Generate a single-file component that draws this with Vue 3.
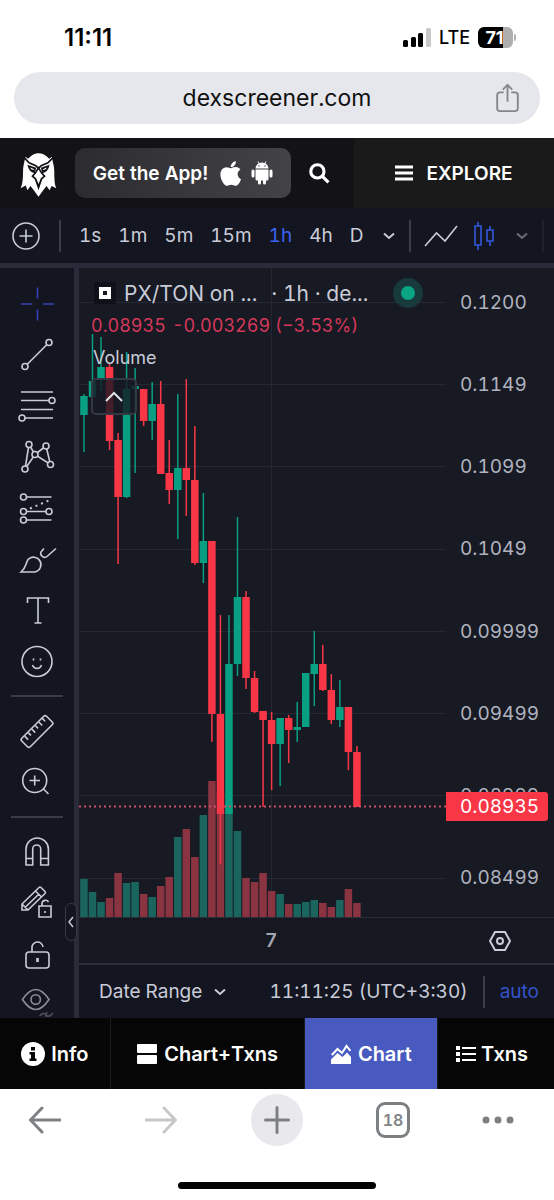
<template>
  <div class="phone">
    <div class="status-bar">
      <span class="clock">11:11</span>
      <div class="status-right">
        <svg class="signal" viewBox="0 0 28 19" aria-hidden="true">
          <rect x="0" y="12" width="5" height="7" rx="1.5" />
          <rect x="8" y="9" width="5" height="10" rx="1.5" />
          <rect x="15" y="5" width="5" height="14" rx="1.5" />
          <rect class="weak" x="23" y="0" width="5" height="19" rx="1.5" />
        </svg>
        <span class="network">LTE</span>
        <span class="battery">71</span>
      </div>
    </div>

    <div class="address">
      <input v-model="url" class="url" type="text" aria-label="Address" />
      <button class="share" aria-label="Share">
        <svg viewBox="0 0 24 32" aria-hidden="true">
          <path d="M8 10H4a3 3 0 0 0-3 3v14a3 3 0 0 0 3 3h16a3 3 0 0 0 3-3V13a3 3 0 0 0-3-3h-4M12 20V2M7 7l5-5 5 5" />
        </svg>
      </button>
    </div>

    <header class="site-header">
      <a class="logo" href="#" aria-label="Home">
        <svg viewBox="60 52 110 134" aria-hidden="true">
          <path fill="#fff" d="M76 66L84 72Q115 40 147 72L155 66C156 80 162 90 162 110C162 135 163 148 168 160L154 153L148 166L139 153L129 166L115 185L101 166L91 153L82 166L77 152L62 160C68 145 69 130 69 110C69 90 74 80 76 66Z" />
          <path fill="none" stroke="#121217" stroke-width="5" d="M72 68L87 84L107 93L115 101L123 93L143 84L159 68" />
          <path fill="#121217" d="M82 90L108 99L104 115Q86 112 82 90ZM148 90L122 99L126 115Q144 112 148 90Z" />
          <path fill="#fff" d="M90 98L103 103Q94 108 90 98ZM140 98L127 103Q136 108 140 98Z" />
          <path fill="#fff" stroke="#121217" stroke-width="5" d="M115 99L106 114L97 124L106 132L115 154L124 132L133 124L124 114Z" />
          <path fill="#121217" d="M104 132L115 166L126 132L115 152Z" />
        </svg>
      </a>
      <button class="get-app">
        <span>Get the App!</span>
        <svg class="apple" viewBox="0 28 376 456" aria-hidden="true">
          <path d="M318.7 268.7c-.2-36.7 16.4-64.4 50-84.8-18.8-26.9-47.2-41.7-84.7-44.6-35.5-2.8-74.3 20.7-88.5 20.7-15 0-49.4-19.7-76.4-19.7C63.3 141.2 4 184.8 4 273.5q0 39.3 14.4 81.2c12.8 36.7 59 126.7 107.2 125.2 25.2-.6 43-17.9 75.8-17.9 31.8 0 48.3 17.9 76.4 17.9 48.6-.7 90.4-82.5 102.6-119.3-65.2-30.7-61.7-90-61.7-91.9zm-56.6-164.2c27.3-32.4 24.8-61.9 24-72.5-24.1 1.4-52 16.4-67.9 34.9-17.5 19.8-27.8 44.3-25.6 71.9 26.1 2 49.9-11.4 69.5-34.3z" />
        </svg>
        <svg class="android" viewBox="0 0 22 24" aria-hidden="true">
          <path d="M4.5 7.5a6.5 6 0 0 1 13 0zM4.5 8.5h13V18a1.5 1.5 0 0 1-1.5 1.5h-1V22a1.5 1.5 0 0 1-3 0v-2.5h-2V22a1.5 1.5 0 0 1-3 0v-2.5H6A1.5 1.5 0 0 1 4.5 18z" />
          <rect x="0.5" y="8.5" width="3" height="8" rx="1.5" />
          <rect x="18.5" y="8.5" width="3" height="8" rx="1.5" />
          <path class="antenna" d="M7 .5l1.5 2.5M15 .5l-1.5 2.5" />
          <circle class="hole" cx="8" cy="5" r="0.7" />
          <circle class="hole" cx="14" cy="5" r="0.7" />
        </svg>
      </button>
      <button class="search" aria-label="Search">
        <svg viewBox="0 0 20 20" aria-hidden="true">
          <circle cx="8" cy="8" r="6.3" />
          <path d="M12.5 12.5L18.5 18.5" />
        </svg>
      </button>
      <button class="explore">
        <svg viewBox="0 0 18 16" aria-hidden="true">
          <path d="M0 2h18M0 8h18M0 14h18" />
        </svg>
        <span>EXPLORE</span>
      </button>
    </header>

    <div class="toolbar">
      <button class="tool add" aria-label="Compare">
        <svg width="28" height="28" viewBox="0 0 28 28" aria-hidden="true">
          <circle cx="14" cy="14" r="13" />
          <path d="M14 7.5v13M7.5 14h13" />
        </svg>
      </button>
      <span class="divider"></span>
      <div class="intervals">
        <button
          v-for="i in intervals"
          :key="i"
          class="interval"
          :class="{ active: i === interval }"
          @click="interval = i"
        >{{ i }}</button>
      </div>
      <button class="tool more" aria-label="More intervals">
        <svg width="12" height="8" viewBox="0 0 12 8" aria-hidden="true"><path d="M1 1.5l5 4.5 5-4.5" /></svg>
      </button>
      <span class="divider"></span>
      <button class="tool line" aria-label="Line chart">
        <svg width="34" height="22" viewBox="0 0 34 22" aria-hidden="true"><path d="M1 21L12.5 8l8.5 8L33 1" /></svg>
      </button>
      <button class="tool candle-type" aria-label="Candles">
        <svg width="22" height="30" viewBox="0 0 22 30" aria-hidden="true">
          <path d="M2 5h6v19H2zM5 1v4M5 24v5M14 9h6v11h-6zM17 5v4M17 20v5" />
        </svg>
      </button>
      <button class="tool dim" aria-label="Chart types">
        <svg width="12" height="8" viewBox="0 0 12 8" aria-hidden="true"><path d="M1 1.5l5 4.5 5-4.5" /></svg>
      </button>
      <span class="divider faint"></span>
    </div>

    <main class="workspace">
      <aside class="drawing-tools">
        <template v-for="t in tools" :key="t.name">
          <button class="draw" :class="[t.name, { active: t.name === tool }]" :aria-label="t.name" @click="tool = t.name">
            <svg width="44" height="44" viewBox="0 0 44 44" aria-hidden="true">
              <path :d="t.d" />
              <path v-if="t.dots" class="dots" :d="t.dots" />
              <path v-if="t.next" class="next" :d="t.next" />
              <g v-if="t.name === 'ruler'" transform="rotate(-45 22 22.5)">
                <rect x="4.5" y="16.5" width="35" height="12" rx="2" />
                <path d="M10 17v5M15 17v4M20 17v5M25 17v4M30 17v5M35 17v4" />
              </g>
              <circle v-for="(c, n) in t.circles || []" :key="n" class="node" :cx="c[0]" :cy="c[1]" :r="c[2] || 3" />
            </svg>
          </button>
          <span v-if="t.last" class="rule"></span>
        </template>
        <button class="collapse" aria-label="Hide drawing tools">
          <svg width="6" height="12" viewBox="0 0 6 12" aria-hidden="true"><path d="M5 1L1 6l4 5" /></svg>
        </button>
      </aside>

      <section class="chart">
        <div class="plot-row">
          <div class="plot">
            <svg class="candles" viewBox="0 0 367 649" preserveAspectRatio="none" role="img" aria-label="PX/TON price">
              <path class="grid" d="M0 34.5H367M0 116.5H367M0 198.5H367M0 281.5H367M0 363.5H367M0 445.5H367M0 527.5H367M0 610.5H367M192.5 0V649" />
              <g v-for="(c, n) in candles" :key="n" :class="c[0] ? 'up' : 'down'">
                <rect class="volume" :x="barX(n)" :y="c[5]" width="7.5" :height="649 - c[5]" />
                <rect :x="barX(n) + 3" :y="c[1]" width="1.5" :height="c[4] - c[1]" />
                <rect :x="barX(n)" :y="c[2]" width="7.5" :height="c[3] - c[2]" />
              </g>
              <path class="last-price" d="M0 538.5H367" />
            </svg>

            <div class="legend">
              <div class="legend-title">
                <span class="pair-icon"></span>
                <span class="pair">PX/TON on ...</span>
                <span class="source">· 1h · de...</span>
                <span class="live"></span>
              </div>
              <div class="legend-values">
                <span>0.08935</span>
                <span>-0.003269 (−3.53%)</span>
              </div>
              <div class="legend-volume">Volume</div>
              <button class="fold" aria-label="Hide indicators">
                <svg width="18" height="11" viewBox="0 0 18 11" aria-hidden="true"><path d="M1 10l8-8 8 8" /></svg>
              </button>
            </div>
          </div>
          <div class="price-axis">
            <span v-for="p in prices" :key="p">{{ p }}</span>
            <span class="current">0.08935</span>
          </div>
        </div>

        <div class="time-axis">
          <span class="day">7</span>
          <button class="axis-settings" aria-label="Axis settings">
            <svg width="22" height="20" viewBox="0 0 22 20" aria-hidden="true">
              <path d="M6 1h10l5 9-5 9H6l-5-9z" />
              <circle cx="11" cy="10" r="3" />
            </svg>
          </button>
        </div>

        <div class="chart-footer">
          <button class="range">
            <span>Date Range</span>
            <svg width="12" height="8" viewBox="0 0 12 8" aria-hidden="true"><path d="M1 1.5l5 4.5 5-4.5" /></svg>
          </button>
          <button class="timezone">11:11:25 (UTC+3:30)</button>
          <span class="divider"></span>
          <button class="auto">auto</button>
        </div>
      </section>
    </main>

    <nav class="tabs">
      <button class="tab info">
        <svg width="24" height="24" viewBox="0 0 24 24" aria-hidden="true">
          <circle cx="12" cy="12" r="12" />
          <path fill="#060606" d="M10 5h4v3.5h-4zM8.5 10H14v6.5h1.5V19h-7v-2.5H10v-4H8.5z" />
        </svg>
        <span>Info</span>
      </button>
      <button class="tab both">
        <svg width="20" height="20" viewBox="0 0 20 20" aria-hidden="true">
          <rect x="0" y="0" width="20" height="9" rx="1" />
          <rect x="0" y="11" width="20" height="9" rx="1" />
        </svg>
        <span>Chart+Txns</span>
      </button>
      <button class="tab chart-tab">
        <svg width="20" height="20" viewBox="0 0 20 20" aria-hidden="true">
          <path d="M0 20v-4.5L6.5 9l5 4 4.5-4.5L20 13v7z" />
          <path class="peak" d="M.8 11L6.5 5l4.5 4L15.5 2l4 5" />
        </svg>
        <span>Chart</span>
      </button>
      <button class="tab txns">
        <svg width="20" height="16" viewBox="0 0 20 16" aria-hidden="true">
          <path d="M0 0h4v4H0zM0 6h4v4H0zM0 12h4v4H0zM6 1h14v2H6zM6 7h14v2H6zM6 13h14v2H6z" />
        </svg>
        <span>Txns</span>
      </button>
    </nav>

    <footer class="browser-nav">
      <div class="nav-buttons">
        <button aria-label="Back">
          <svg width="32" height="28" viewBox="0 0 32 28" aria-hidden="true"><path d="M31 14H2M13 2L1.5 14 13 26" /></svg>
        </button>
        <button class="disabled" aria-label="Forward">
          <svg width="32" height="28" viewBox="0 0 32 28" aria-hidden="true"><path d="M1 14h29M19 2l11.5 12L19 26" /></svg>
        </button>
        <button aria-label="New tab">
          <span class="new-tab">
            <svg width="26" height="28" viewBox="0 0 26 28" aria-hidden="true"><path d="M13 1.5v25M1.5 14h23" /></svg>
          </span>
        </button>
        <button aria-label="Tabs"><span class="count">18</span></button>
        <button aria-label="Menu">
          <svg class="dots-menu" width="32" height="8" viewBox="0 0 32 8" aria-hidden="true">
            <circle cx="4" cy="4" r="3.5" />
            <circle cx="16" cy="4" r="3.5" />
            <circle cx="28" cy="4" r="3.5" />
          </svg>
        </button>
      </div>
      <span class="home-bar"></span>
    </footer>
  </div>
</template>

<script setup>
import { ref } from 'vue'

const url = ref('dexscreener.com')
const interval = ref('1h')
const tool = ref('cross')

const intervals = ['1s', '1m', '5m', '15m', '1h', '4h', 'D']
const prices = ['0.1200', '0.1149', '0.1099', '0.1049', '0.09999', '0.09499', '0.08999', '0.08499']

const tools = [
  { name: 'cross', d: 'M6 22h11M28 22h11M22.5 5.5v11M22.5 27.5v11' },
  { name: 'trend', d: 'M12 31.5L32 11.5', circles: [[34, 9.5], [10, 33.5]] },
  { name: 'fib', d: 'M6 8h32M6 16.5h28M6 25.5h32M10 34h28', circles: [[37, 16.5], [7, 34]] },
  {
    name: 'pattern',
    d: 'M14 9.5L20 19.5L31 11L35.5 29.5L20 19.5L10 34L14 9.5',
    circles: [[14, 9.5], [31, 11], [20, 19.5], [10, 34], [35.5, 29.5]]
  },
  {
    name: 'forecast',
    d: 'M11.5 11H36.5M11.5 25.5H31M11.5 34H36.5',
    dots: 'M15 22.5L35 14',
    circles: [[8.5, 11], [8.5, 25.5], [34, 25.5], [8.5, 34]]
  },
  { name: 'brush', d: 'M6 35C11 31 10.5 27 13 22.5A7.5 7.5 0 1 1 20 35ZM29 11.5l-3 3.5c-1.5 3 3 7 6 4.5L41 11.5' },
  { name: 'text', d: 'M12.5 15v-5h21v5M23 10v25M19.5 35h7' },
  { name: 'emoji', d: 'M17.5 26c1.5 4.5 7.5 4.5 9 0M18.5 19.5v2M25.5 19.5v2', circles: [[22, 22.5, 15]], last: true },
  { name: 'ruler', d: '' },
  { name: 'zoom', d: 'M28.5 29L33.5 34M14.5 20.5h10.5M19.7 15.5v10', circles: [[19.7, 20.5, 12]], last: true },
  { name: 'magnet', d: 'M11 35V19.2a11.2 11.2 0 0 1 22.4 0V35h-7.7V19a4 4 0 0 0-8 0V35zM11 28.5h6.7M25.7 28.5h7.7' },
  {
    name: 'pencil',
    d: 'M7 29v-6L24 6.5q1-1 2 0l4 4q1 1 0 2L13 29zM20.5 10l6 6M10 26.5L24 13M7 23l6 6M24 25h12v11H24zM27 25v-2.5a3.5 3.5 0 0 1 6.5-1.5M30 30v2'
  },
  { name: 'lock', d: 'M14 20h17a3 3 0 0 1 3 3v10a3 3 0 0 1-3 3H14a3 3 0 0 1-3-3V23a3 3 0 0 1 3-3M17 20v-4a5.5 5.5 0 0 1 11-1M22 26v4M23 26v4' },
  {
    name: 'eye',
    d: 'M7.5 23.5Q20.7 3.5 34 23.5Q20.7 43.5 7.5 23.5Z',
    next: 'M24.5 40q4-4 6-1.5l1 3.5M32 36l-1 3q3 3 7-2',
    circles: [[20.7, 23.5, 4.7]]
  }
]

// up, high, body top, body bottom, low, volume top
const candles = [
  [1, 126, 128, 147, 184, 611],
  [1, 66, 113, 129, 130, 624],
  [1, 69, 99, 112, 123, 634],
  [0, 96, 99, 173, 182, 630],
  [0, 165, 172, 229, 296, 605],
  [1, 84, 121, 229, 230, 615],
  [1, 100, 118, 121, 205, 614],
  [0, 121, 121, 153, 158, 626],
  [1, 114, 136, 153, 172, 629],
  [0, 113, 136, 206, 206, 618],
  [0, 172, 205, 222, 236, 609],
  [1, 126, 200, 222, 271, 569],
  [0, 111, 200, 212, 248, 561],
  [0, 158, 212, 295, 297, 589],
  [1, 225, 273, 295, 315, 547],
  [0, 273, 273, 446, 474, 513],
  [0, 347, 446, 546, 596, 525],
  [1, 347, 396, 546, 546, 535],
  [1, 249, 329, 396, 408, 563],
  [0, 323, 329, 410, 421, 610],
  [0, 403, 410, 444, 445, 614],
  [0, 443, 443, 452, 539, 605],
  [0, 444, 452, 476, 522, 623],
  [1, 450, 450, 476, 518, 626],
  [0, 447, 450, 462, 495, 636],
  [1, 434, 459, 462, 474, 636],
  [1, 405, 405, 459, 459, 634],
  [1, 363, 396, 406, 438, 632],
  [0, 377, 396, 422, 423, 635],
  [0, 406, 422, 452, 456, 639],
  [1, 412, 439, 452, 459, 632],
  [0, 439, 439, 484, 502, 621],
  [0, 478, 484, 539, 539, 635]
]

const barX = n => 1.2 + n * 8.53
</script>

<style>
body {
  margin: 0;
  background: #fff;
}
</style>

<style scoped>
.phone {
  font-family: Inter, "Liberation Sans", sans-serif;
  font-variant-numeric: tabular-nums;
  color: #c9ccd8;
  background: #fff;
}
button {
  background: none;
  border: none;
  padding: 0;
  margin: 0;
  font: inherit;
  font-variant-numeric: inherit;
  color: inherit;
  display: flex;
  align-items: center;
  justify-content: center;
  cursor: pointer;
}
svg {
  display: block;
  flex-shrink: 0;
}
.status-bar {
  height: 72px;
  padding: 2px 41px 0 64px;
  display: flex;
  justify-content: space-between;
  align-items: center;
  color: #000;
  box-sizing: border-box;
  font-variant-numeric: proportional-nums;
}
.clock {
  font-size: 24px;
  font-weight: 600;
}
.status-right {
  display: flex;
  align-items: center;
  gap: 8px;
}
.signal {
  width: 28px;
  height: 19px;
}
.signal .weak { fill: #c9c9c9; }
.network {
  font-size: 18px;
  font-weight: 500;
}
.battery {
  position: relative;
  box-sizing: border-box;
  width: 35px;
  height: 21px;
  padding-right: 2px;
  border-radius: 6px;
  background: linear-gradient(90deg, #000 71%, #aeaeae 71%);
  color: #fff;
  text-align: center;
  font-size: 18px;
  font-weight: 700;
  line-height: 21px;
}
.battery::after {
  content: "";
  position: absolute;
  right: -3px;
  top: 7px;
  width: 2px;
  height: 7px;
  border-radius: 0 2px 2px 0;
  background: #aeaeae;
}
.address {
  margin: 0 14px 14px;
  height: 52px;
  border-radius: 26px;
  background: #e5e7ec;
  display: flex;
  align-items: center;
  padding: 0 20px 0 56px;
}
.url {
  flex: 1;
  min-width: 0;
  border: none;
  background: none;
  outline: none;
  text-align: center;
  font: inherit;
  font-size: 23px;
  color: #111;
  padding: 0;
}
.share {
  width: 26px;
  margin-left: 10px;
}
.share svg {
  width: 23px;
  height: 30px;
  fill: none;
  stroke: #83868a;
  stroke-width: 2;
}
.site-header {
  height: 70px;
  display: flex;
  align-items: center;
  background: #121217;
  color: #fff;
  font-weight: 600;
  font-size: 19px;
}
.logo { margin: 2px 18px 0 20px; }
.logo svg {
  width: 37px;
  height: 45px;
}
.get-app {
  width: 216px;
  height: 50px;
  border-radius: 10px;
  background: linear-gradient(90deg, #2b2b30, #434347);
}
.apple {
  width: 21px;
  height: 25px;
  fill: #fff;
  margin: 0 10px 0 12px;
}
.android {
  width: 22px;
  height: 24px;
  fill: #fff;
}
.antenna { stroke: #fff; }
.hole { fill: #3e3e42; }
.search {
  width: 63px;
  height: 70px;
}
.search svg {
  width: 21px;
  height: 21px;
  margin-right: 6px;
  fill: none;
  stroke: #fff;
  stroke-width: 3;
}
.explore {
  flex: 1;
  height: 70px;
  gap: 13px;
  background: #1a1a1a;
}
.explore svg {
  width: 18px;
  height: 16px;
  stroke: #fff;
  stroke-width: 3;
}
.toolbar {
  height: 55px;
  display: flex;
  align-items: center;
  background: #131520;
  border-bottom: 5px solid #292c38;
  overflow: hidden;
}
.tool svg {
  fill: none;
  stroke: #c9ccd8;
  stroke-width: 2;
}
.add { margin: 0 19px 0 12px; }
.add svg { stroke-width: 1.6; }
.divider {
  width: 2px;
  height: 32px;
  background: #3a3d49;
  flex-shrink: 0;
}
.faint {
  background: #1f222d;
  margin-left: 14px;
}
.intervals {
  display: flex;
  gap: 17px;
  margin: 0 20px 0 18px;
  font-size: 19px;
}
.active { color: #3a62f0; }
.more { margin-right: 14px; }
.line { margin: 0 15px 0 13px; }
.line svg { stroke-width: 1.6; }
.candle-type { margin-right: 21px; }
.candle-type svg {
  stroke: #3457dc;
  stroke-width: 1.6;
}
.dim svg { stroke: #6a6d79; }
.workspace {
  display: flex;
  background: #131520;
}
.drawing-tools {
  width: 74px;
  flex-shrink: 0;
  padding-top: 10px;
  border-right: 5px solid #292c38;
  display: flex;
  flex-direction: column;
  position: relative;
}
.draw { height: 51px; }
.draw.eye {
  height: 38px;
  overflow: hidden;
}
.draw svg {
  fill: none;
  stroke: #c9ccd8;
  stroke-width: 1.6;
}
.draw.active svg { stroke: #3344b8; }
.draw.eye svg { stroke: #8b8e9a; }
.draw .next { stroke: #4c4f5a; }
.node { fill: #131520; }
.emoji .node,
.zoom .node { fill: none; }
.draw .dots {
  stroke-dasharray: 2 4;
  stroke-width: 2;
}
.rule {
  height: 2px;
  width: 52px;
  margin: 9px 0 8px 11px;
  background: #393c48;
}
.collapse {
  position: absolute;
  left: 65px;
  bottom: 77px;
  width: 12px;
  height: 38px;
  border: 1px solid #363945;
  border-radius: 6px;
  background: #131520;
}
.collapse svg {
  fill: none;
  stroke: #c9ccd8;
  stroke-width: 1.5;
}
.chart {
  flex: 1;
  min-width: 0;
  background: #171923;
}
.plot-row {
  display: flex;
  border-bottom: 1px solid #2b2e39;
}
.plot {
  flex: 1;
  min-width: 0;
  position: relative;
}
.candles {
  width: 100%;
  height: 649px;
}
.grid {
  stroke: #252832;
  stroke-width: 1;
}
.up { fill: #089f82; }
.down { fill: #f93646; }
.up .volume { fill: #1a665e; }
.down .volume { fill: #8a3341; }
.last-price {
  stroke: #c94f62;
  stroke-width: 2;
  stroke-dasharray: 2 3;
}
.legend {
  position: absolute;
  top: 8px;
  left: 12px;
  right: 0;
}
.legend-title {
  display: flex;
  align-items: center;
  height: 34px;
  font-size: 21px;
  white-space: nowrap;
}
.pair-icon {
  width: 4px;
  height: 4px;
  border: 4px solid #fff;
  outline: 5px solid #0f1119;
  margin: 0 13px 0 8px;
}
.source { margin-left: 14px; }
.live {
  width: 14px;
  height: 14px;
  border: 8px solid #193a3d;
  border-radius: 50%;
  background: #0ba485;
  margin-left: auto;
  margin-right: 23px;
}
.legend-values {
  display: flex;
  gap: 6px;
  font-size: 18px;
  line-height: 32px;
  color: #d5385a;
  white-space: nowrap;
}
.legend-volume {
  font-size: 18px;
  line-height: 32px;
  padding-left: 2px;
}
.fold {
  width: 46px;
  height: 37px;
  margin-top: 4px;
  border: 2px solid #343843;
  border-radius: 5px;
  background: rgba(23, 25, 35, 0.8);
}
.fold svg {
  fill: none;
  stroke: #e0e2ea;
  stroke-width: 2;
}
.price-axis {
  width: 108px;
  box-sizing: border-box;
  padding: 24px 0 28px 14px;
  display: flex;
  flex-direction: column;
  justify-content: space-between;
  position: relative;
  font-size: 19px;
  line-height: 22px;
  color: #b0b3bf;
}
.current {
  position: absolute;
  top: 524px;
  left: 0;
  width: 88px;
  padding-left: 14px;
  line-height: 29px;
  border-radius: 0 3px 3px 0;
  background: #f93646;
  color: #fff;
}
.time-axis {
  height: 45px;
  display: flex;
  align-items: center;
  justify-content: space-between;
  padding: 0 43px 0 186px;
  border-bottom: 2px solid #2b2e39;
  background: #151721;
}
.day {
  font-size: 19px;
  font-weight: 600;
  color: #a4a7b3;
}
.axis-settings svg {
  fill: none;
  stroke: #c9ccd8;
  stroke-width: 2;
}
.chart-footer {
  height: 53px;
  display: flex;
  align-items: center;
  gap: 15px;
  padding: 0 15px 0 20px;
  font-size: 19px;
  background: #131520;
  white-space: nowrap;
}
.range { gap: 12px; }
.range svg {
  fill: none;
  stroke: #c9ccd8;
  stroke-width: 2;
}
.timezone { margin-left: auto; }
.auto { color: #3353c8; }
.tabs {
  display: flex;
  height: 71px;
  background: #060606;
  color: #fff;
  font-size: 20px;
  font-weight: 600;
}
.tab {
  gap: 7px;
  flex: 108 1 0;
  min-width: 0;
  white-space: nowrap;
  border-right: 1px solid #1c1c1c;
}
.tab svg { fill: #fff; }
.tab.info {
  flex-grow: 110;
  gap: 6px;
}
.tab.both { flex-grow: 194; }
.tab.chart-tab {
  flex-grow: 132;
  background: #485ac0;
}
.tab.txns {
  border-right: none;
  gap: 5px;
  padding-right: 8px;
}
.tab .peak {
  fill: none;
  stroke: #fff;
  stroke-width: 2;
}
.browser-nav {
  display: flex;
  flex-direction: column;
  align-items: center;
  color: #808386;
}
.nav-buttons {
  width: 100%;
  box-sizing: border-box;
  display: grid;
  grid-template-columns: 116fr 116fr 116fr 105fr 32px;
  padding: 5px 40px 0 29px;
}
.nav-buttons button {
  width: 32px;
  height: 52px;
}
.nav-buttons svg {
  fill: none;
  stroke: #7d8083;
  stroke-width: 3;
  stroke-linecap: round;
}
.nav-buttons .disabled svg { stroke: #c6c8ca; }
.nav-buttons .dots-menu {
  fill: #7d8083;
  stroke: none;
}
.new-tab {
  width: 52px;
  height: 52px;
  border-radius: 50%;
  background: #e8e8ed;
  display: flex;
  align-items: center;
  justify-content: center;
  flex-shrink: 0;
}
.count {
  width: 28px;
  height: 30px;
  border: 3px solid #7d8083;
  border-radius: 9px;
  font-size: 16px;
  font-weight: 600;
  line-height: 30px;
  text-align: center;
  flex-shrink: 0;
}
.home-bar {
  width: 198px;
  height: 7px;
  border-radius: 4px;
  background: #000;
  margin: 36px 0 11px;
}
</style>
